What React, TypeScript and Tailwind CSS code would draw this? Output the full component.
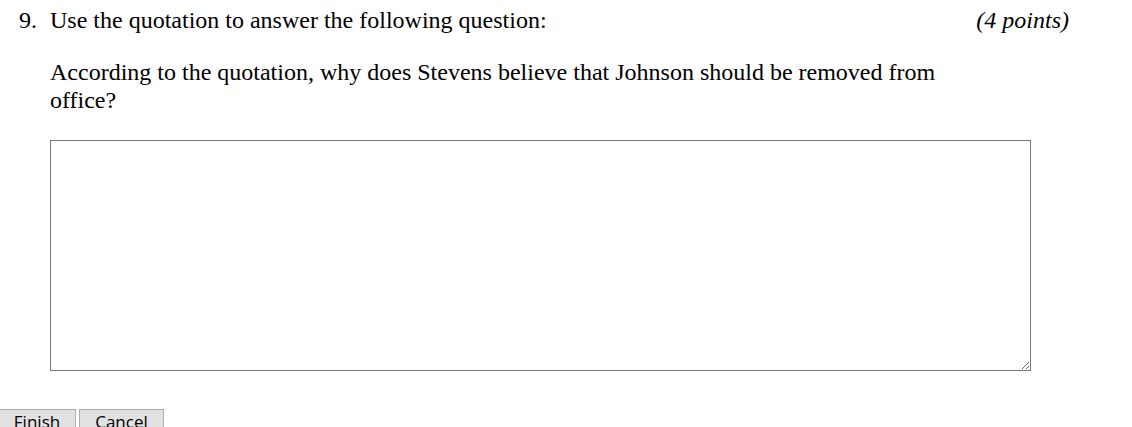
export default function App() {
  return (
    <div className="w-[1132px] h-[427px] overflow-hidden bg-white relative" style={{ fontFamily: '"Liberation Serif", "Times New Roman", serif' }}>
      <div className="flex pt-[6px] text-[24px] leading-[28px] text-black">
        <div className="w-[50px] pl-[19px] shrink-0">9.</div>
        <div className="flex-1 pr-[63px]">
          <div className="flex justify-between">
            <span>Use the quotation to answer the following question:</span>
            <span className="italic">(4 points)</span>
          </div>
          <p className="mt-[24px] w-[920px]">
            According to the quotation, why does Stevens believe that Johnson should be removed from office?
          </p>
          <textarea className="mt-[26px] block w-[981px] h-[231px] border border-[#767676] bg-white outline-none resize" />
        </div>
      </div>
      <div className="flex gap-[3px] mt-[38px] ml-[-2px]" style={{ fontFamily: '"Open Sans", "Noto Sans", sans-serif' }}>
        <button className="h-[34px] w-[78px] pb-[9px] bg-[#e1e1e1] border border-[#adadad] text-[17px] leading-none text-black">Finish</button>
        <button className="h-[34px] w-[85px] pb-[9px] bg-[#e1e1e1] border border-[#adadad] text-[17px] leading-none text-black">Cancel</button>
      </div>
    </div>
  );
}
